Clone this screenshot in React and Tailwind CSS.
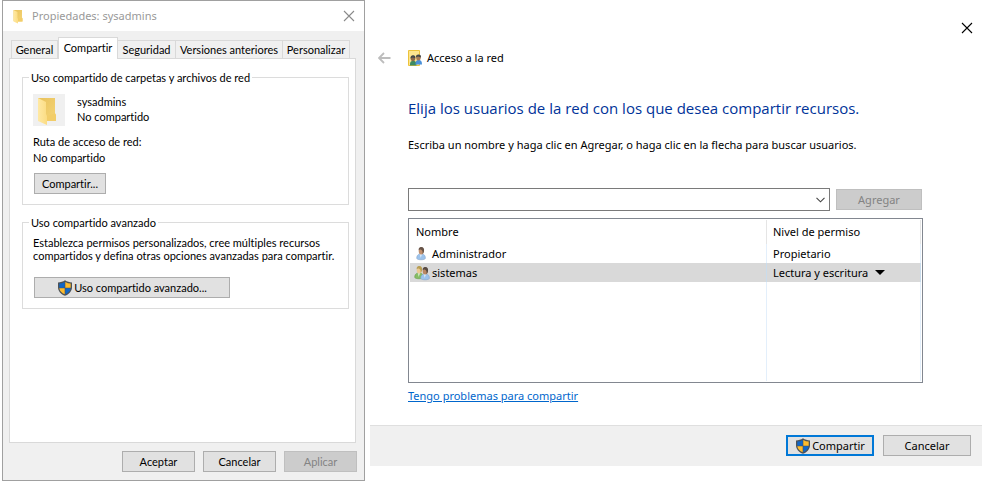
import React from "react";

const classicButton =
  "flex h-[21px] items-center justify-center border border-[#adadad] bg-[#e1e1e1] text-black";
const disabledButton =
  "flex h-[21px] items-center justify-center border border-[#bfbfbf] bg-[#cccccc] text-[#838383]";

function Shield() {
  return (
    <svg width="16" height="16" viewBox="0 0 16 16" aria-hidden="true" className="shrink-0">
      <path d="M8 0.3C6 1.7 3.6 2.3 1 2.4V7.2C1 11.2 4 14.2 8 15.8C12 14.2 15 11.2 15 7.2V2.4C12.400 2.300 10 1.700 8 0.300Z" fill="#4d5257" />
      <path d="M7.700 1.900C6 2.900 4.200 3.400 2.300 3.500V7.800H7.700Z" fill="#0f66c8" />
      <path d="M8.300 1.900C10 2.900 11.800 3.400 13.700 3.500V7.800H8.300Z" fill="#fdbb2d" />
      <path d="M2.300 8.200H7.700V14.300C4.800 13 2.600 11 2.300 8.200Z" fill="#fdbb2d" />
      <path d="M13.700 8.200H8.300V14.300C11.200 13 13.400 11 13.700 8.200Z" fill="#0f66c8" />
    </svg>
  );
}

function Folder({ size }) {
  return (
    <svg width={size} height={size} viewBox="0 0 32 32" aria-hidden="true">
      <defs>
        <linearGradient id="folderFront" x1="0" x2="1">
          <stop offset="0" stopColor="#ffe9a4" />
          <stop offset="1" stopColor="#fbdc83" />
        </linearGradient>
        <linearGradient id="folderBack" x1="0" x2="1" y1="0" y2="1">
          <stop offset="0" stopColor="#e9c25c" />
          <stop offset="1" stopColor="#f5d577" />
        </linearGradient>
      </defs>
      <path d="M5 4H22V20L23 21V27H8L5 26Z" fill="url(#folderBack)" />
      <path d="M5 4L13 8V20L14 22V31L5 27Z" fill="url(#folderFront)" />
      <path d="M22 19L23 21V27H14V22L20 20Z" fill="#f2cd69" />
    </svg>
  );
}

function PersonShape({ x, y, hair, face, body, edge }) {
  return (
    <g transform={`translate(${x} ${y})`}>
      <path d="M0.700 11.500C0.600 8.800 1.800 7.400 3.800 6.900H6.400C8.300 7.400 9.500 8.800 9.400 11.500C8.500 13.200 1.600 13.200 0.700 11.500Z" fill={body} stroke={edge} strokeWidth="0.500" />
      <path d="M3.600 7L4.600 11L6.300 7Z" fill="#ffffff" fillOpacity="0.600" />
      <ellipse cx="5.200" cy="3.900" rx="2.500" ry="3.500" fill={face} />
      <path d="M5 0C7.600 -0.100 8.400 1.700 8 4.200C7.700 5.600 7.200 6.300 6.500 6.700C6.900 4.800 6.400 3.300 4.800 2.600C4 2.400 3.200 2.600 2.700 3.200C2.500 1.200 3.400 0.100 5 0Z" fill={hair} />
    </g>
  );
}

function UserIcon() {
  return (
    <svg width="16" height="16" viewBox="0 0 16 16" aria-hidden="true">
      <PersonShape x={2} y={1} hair="#665348" face="#c08f6d" body="#9cc3ec" edge="#7f9dc2" />
    </svg>
  );
}

function GroupIcon() {
  return (
    <svg width="16" height="16" viewBox="0 0 16 16" aria-hidden="true">
      <PersonShape x={0} y={1} hair="#b79d52" face="#ecca92" body="#86bd63" edge="#5e9445" />
      <PersonShape x={6} y={2} hair="#574a42" face="#b98762" body="#9cc3ec" edge="#7f9dc2" />
    </svg>
  );
}

function NetworkIcon() {
  return (
    <svg width="16" height="16" viewBox="0 0 16 16" aria-hidden="true">
      <path d="M0.500 0.500H11.500V15.500H0.500Z" fill="#fde58f" stroke="#ecc33c" />
      <path d="M2 15.500C1.800 12 3 11 5 10.800C7.500 11 8.500 12 8.500 15.500Z" fill="#3d8a62" />
      <ellipse cx="5" cy="8.500" rx="2.300" ry="2.700" fill="#8c6849" />
      <path d="M2.500 8.500C2.300 5.500 4 5 5.500 5.200C7.500 5.500 7.700 7 7.200 8.300L4.500 7.500Z" fill="#44484a" />
      <path d="M7.500 14.500C7.300 11.500 8.500 10 10.500 9.800C13 10 14 11.500 14 14.500Z" fill="#4a90d9" />
      <ellipse cx="10.500" cy="7.800" rx="2.300" ry="2.600" fill="#a77b55" />
      <path d="M8 7.500C7.800 4.700 9.500 4.300 11 4.500C13 4.800 13.200 6 12.800 7.500L10 6.500Z" fill="#44484a" />
    </svg>
  );
}

function Cross({ className }) {
  return (
    <svg width="12" height="12" viewBox="0 0 12 12" className={className} aria-hidden="true">
      <path d="M1 1L11 11M11 1L1 11" stroke="currentColor" strokeWidth="1.100" fill="none" />
    </svg>
  );
}

function Tab({ label, selected, className }) {
  return (
    <button
      type="button"
      role="tab"
      aria-selected={!!selected}
      className={`flex items-center justify-center whitespace-nowrap border-[#d9d9d9] ${
        selected ? "-mb-px h-[22px] border-x border-t bg-white pb-[2px]" : "h-[18px] border-t border-r bg-[#f0f0f0]"
      } ${className}`}
    >
      {label}
    </button>
  );
}

function PropertiesDialog() {
  return (
    <section className="border border-[#a0a0a0] bg-[#f0f0f0] font-[Lato,sans-serif] text-[11px] leading-[13px] text-black [font-variant-ligatures:none]">
      <header className="flex h-[30px] items-center bg-white pr-[9px] pl-2">
        <Folder size={16} />
        <h1 className="ml-[5px] flex-1 font-['Noto_Sans',sans-serif] text-[11px] leading-4 text-[#999999]">
          Propiedades: sysadmins
        </h1>
        <button type="button" aria-label="Cerrar">
          <Cross className="text-[#8a8a8a]" />
        </button>
      </header>
      <div className="pt-[6px] pr-[7px] pb-2 pl-[6px]">
        <div role="tablist" className="flex items-end pl-[2px]">
          <Tab label="General" className="w-[47px] border-l" />
          <Tab label="Compartir" selected className="w-[60px]" />
          <Tab label="Seguridad" className="w-[58px]" />
          <Tab label="Versiones anteriores" className="w-[107px]" />
          <Tab label="Personalizar" className="w-[67px]" />
        </div>
        <div role="tabpanel" className="mr-px border border-[#d9d9d9] bg-white pt-3 pr-[6px] pb-[133px] pl-3">
          <fieldset className="border border-[#dcdcdc] px-[10px] pb-[10px]">
            <legend className="-ml-[4px] px-[2px]">Uso compartido de carpetas y archivos de red</legend>
            <div className="mt-[10px] flex gap-3">
              <div className="size-8 bg-[#f0f0f0]">
                <Folder size={32} />
              </div>
              <div className="leading-[15px]">
                <p>sysadmins</p>
                <p>No compartido</p>
              </div>
            </div>
            <div className="mt-2 leading-4">
              <p>Ruta de acceso de red:</p>
              <p>No compartido</p>
            </div>
            <button type="button" className={`${classicButton} mt-[7px] ml-px w-[72px]`}>
              Compartir...
            </button>
          </fieldset>
          <fieldset className="mt-[11px] border border-[#dcdcdc] px-[10px] pb-[10px]">
            <legend className="-ml-[4px] px-[2px]">Uso compartido avanzado</legend>
            <p className="mt-[7px]">
              Establezca permisos personalizados, cree múltiples recursos compartidos y defina otras opciones avanzadas
              para compartir.
            </p>
            <button type="button" className={`${classicButton} mt-[15px] ml-px w-[196px]`}>
              <Shield />
              <span className="ml-px">Uso compartido avanzado...</span>
            </button>
          </fieldset>
        </div>
        <div className="mt-2 flex justify-end gap-2">
          <button type="button" className={`${classicButton} w-[73px]`}>Aceptar</button>
          <button type="button" className={`${classicButton} w-[73px]`}>Cancelar</button>
          <button type="button" disabled className={`${disabledButton} w-[73px]`}>Aplicar</button>
        </div>
      </div>
    </section>
  );
}

function NetworkAccessDialog() {
  return (
    <section className="bg-white font-['Noto_Sans',sans-serif] text-[11px] leading-4 text-black">
      <div className="flex justify-end pt-[22px] pr-[9px]">
        <button type="button" aria-label="Cerrar">
          <Cross className="text-black" />
        </button>
      </div>
      <header className="mt-4 flex items-center pl-2">
        <button type="button" aria-label="Atrás" disabled>
          <svg width="13" height="12" viewBox="0 0 13 12" aria-hidden="true">
            <path d="M6 1L1 6L6 11M1 6H12.500" fill="none" stroke="#bdbdbd" strokeWidth="1.800" />
          </svg>
        </button>
        <span className="ml-[17px]">
          <NetworkIcon />
        </span>
        <h1 className="ml-[3px]">Acceso a la red</h1>
      </header>
      <main className="pr-[59px] pl-[38px]">
        <h2 className="mt-8 font-['Open_Sans',sans-serif] text-[15px] leading-5 whitespace-nowrap text-[#003399]">
          Elija los usuarios de la red con los que desea compartir recursos.
        </h2>
        <label htmlFor="user" className="mt-[19px] block whitespace-nowrap">
          Escriba un nombre y haga clic en Agregar, o haga clic en la flecha para buscar usuarios.
        </label>
        <div className="mt-[35px] flex items-center gap-[6px] pr-px">
          <div className="flex h-[23px] flex-1 items-center border border-[#7a7a7a]">
            <input id="user" type="text" className="h-full min-w-0 flex-1 px-1 outline-none" />
            <button type="button" aria-label="Buscar usuarios" className="px-1">
              <svg width="9" height="6" viewBox="0 0 9 6" aria-hidden="true">
                <path d="M0.500 0.800L4.500 4.800L8.500 0.800" fill="none" stroke="#444" strokeWidth="1.100" />
              </svg>
            </button>
          </div>
          <button type="button" disabled className={`${disabledButton} w-[86px]`}>Agregar</button>
        </div>
        <div className="mt-[7px] border border-[#828790] p-px">
          <table className="w-full table-fixed border-collapse text-left">
            <thead>
              <tr className="h-6">
                <th className="border-r border-[#e5e5e5] pl-[6px] font-normal">Nombre</th>
                <th className="w-[154px] border-r border-[#e5e5e5] pl-[6px] font-normal">Nivel de permiso</th>
              </tr>
            </thead>
            <tbody>
              <tr className="h-[19px]">
                <td className="border-r border-[#e3effb] pl-1">
                  <div className="flex items-center gap-[2px]"><UserIcon />Administrador</div>
                </td>
                <td className="border-r border-[#e3effb] pl-[6px]">Propietario</td>
              </tr>
              <tr className="h-[19px] bg-[#d9d9d9]">
                <td className="border-r border-[#c9dcec] pl-1">
                  <div className="flex items-center gap-[2px]"><GroupIcon />sistemas</div>
                </td>
                <td className="border-r border-[#c9dcec] pl-[6px]">
                  <div className="flex items-center gap-[6px]">
                    <select aria-label="Nivel de permiso de sistemas" className="appearance-none bg-transparent">
                      <option>Lectura y escritura</option>
                    </select>
                    <svg width="10" height="5" viewBox="0 0 10 5" aria-hidden="true">
                      <path d="M0 0H10L5 5Z" fill="#000" />
                    </svg>
                  </div>
                </td>
              </tr>
              <tr className="h-[99px]">
                <td className="border-r border-[#e3effb]" />
                <td className="border-r border-[#e3effb]" />
              </tr>
            </tbody>
          </table>
        </div>
        <a href="#ayuda" className="mt-[5px] inline-block text-[#0066cc] underline">
          Tengo problemas para compartir
        </a>
      </main>
      <footer className="mt-[21px] flex justify-end gap-[9px] border-t border-[#dfdfdf] bg-[#f0f0f0] pt-[9px] pr-[11px] pb-[10px]">
        <button type="button" className="flex h-[21px] w-[88px] items-center justify-center border-2 border-[#0078d7] bg-[#e1e1e1]">
          <Shield />
          <span className="ml-px">Compartir</span>
        </button>
        <button type="button" className={`${classicButton} w-[88px]`}>Cancelar</button>
      </footer>
    </section>
  );
}

export default function App() {
  return (
    <div className="grid grid-cols-[363fr_612fr] items-start gap-[5px] bg-white pr-[5px] pl-[2px]">
      <PropertiesDialog />
      <NetworkAccessDialog />
    </div>
  );
}
